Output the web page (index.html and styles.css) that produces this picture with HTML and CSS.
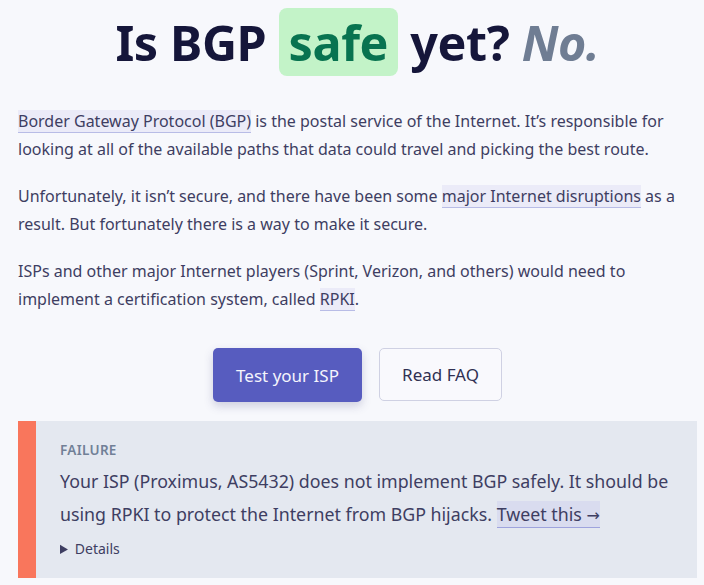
FILE: index.html
```html
<!DOCTYPE html>
<html lang="en">
<head>
<meta charset="utf-8">
<title>Is BGP safe yet? No.</title>
<link rel="stylesheet" href="styles.css">
</head>
<body>
<main class="page">
  <h1 class="title">Is BGP <span class="safe">safe</span> yet? <em class="no">No.</em></h1>
  <p class="text"><a class="link" href="#">Border Gateway Protocol (BGP)</a> is the postal service of the Internet. It’s responsible for looking at all of the available paths that data could travel and picking the best route.</p>
  <p class="text">Unfortunately, it isn’t secure, and there have been some <a class="link" href="#">major Internet disruptions</a> as a result. But fortunately there is a way to make it secure.</p>
  <p class="text">ISPs and other major Internet players (Sprint, Verizon, and others) would need to implement a certification system, called <a class="link" href="#">RPKI</a>.</p>
  <div class="actions">
    <a class="btn btn-primary" href="#">Test your ISP</a>
    <a class="btn btn-secondary" href="#">Read FAQ</a>
  </div>
  <section class="result">
    <div class="result-label">FAILURE</div>
    <p class="result-text">Your ISP (Proximus, AS5432) does not implement BGP safely. It should be using RPKI to protect the Internet from BGP hijacks. <a class="link link-tweet" href="#">Tweet this <span class="arrow">→</span></a></p>
    <details class="details">
      <summary>Details</summary>
    </details>
  </section>
</main>
</body>
</html>
```
FILE: styles.css
```css
html, body {
  margin: 0;
  padding: 0;
  background: #f7f8fc;
}
body {
  font-family: "Noto Sans", "Open Sans", sans-serif;
  color: #3e3e62;
}
.page {
  width: 679px;
  margin: 0 0 0 18px;
  padding-top: 8px;
}
.title {
  margin: 0;
  text-align: center;
  font-size: 48.5px;
  font-weight: 700;
  line-height: 68px;
  color: #15163a;
  letter-spacing: -0.4px;
}
.safe {
  display: inline-block;
  background: #c3f3c8;
  color: #087350;
  border-radius: 8px;
  padding: 0 10px;
  line-height: 68px;
}
.no {
  color: #6f7d93;
  font-style: italic;
}
.text {
  margin: 31px 0 0;
  font-size: 16px;
  line-height: 28.4px;
}
.text + .text {
  margin-top: 18px;
}
.link {
  color: inherit;
  text-decoration: none;
  background: #ebebf8;
  border-bottom: 1px solid #b8bce6;
}
.actions {
  display: flex;
  justify-content: center;
  gap: 17px;
  margin-top: 35px;
}
.btn {
  display: inline-flex;
  align-items: center;
  justify-content: center;
  height: 54px;
  box-sizing: border-box;
  font-size: 17px;
  text-decoration: none;
  border-radius: 5px;
}
.btn-primary {
  width: 149px;
  background: #575cbf;
  color: #f4f4fc;
  box-shadow: 0 4px 10px rgba(60, 60, 120, 0.22);
}
.btn-secondary {
  width: 123px;
  height: 53px;
  background: #f9f9fd;
  color: #303052;
  border: 1px solid #cfd1e3;
}
.result {
  margin-top: 19px;
  background: #e4e8f0;
  border-left: 18px solid #f9765c;
  padding: 20px 24px 18px;
}
.result-label {
  font-size: 13.5px;
  font-weight: 600;
  color: #718097;
  line-height: 18px;
  letter-spacing: 0.3px;
}
.result-text {
  margin: 6px 0 0;
  font-size: 17.8px;
  line-height: 33px;
}
.link-tweet {
  background: #d9dcef;
  border-bottom-color: #9ea3dd;
  padding: 1px 0;
}
.arrow {
  font-family: "DejaVu Sans", sans-serif;
  font-size: 16px;
}
.details {
  margin-top: 6px;
  font-size: 14px;
  line-height: 22px;
}
.details summary {
  cursor: pointer;
}
```
